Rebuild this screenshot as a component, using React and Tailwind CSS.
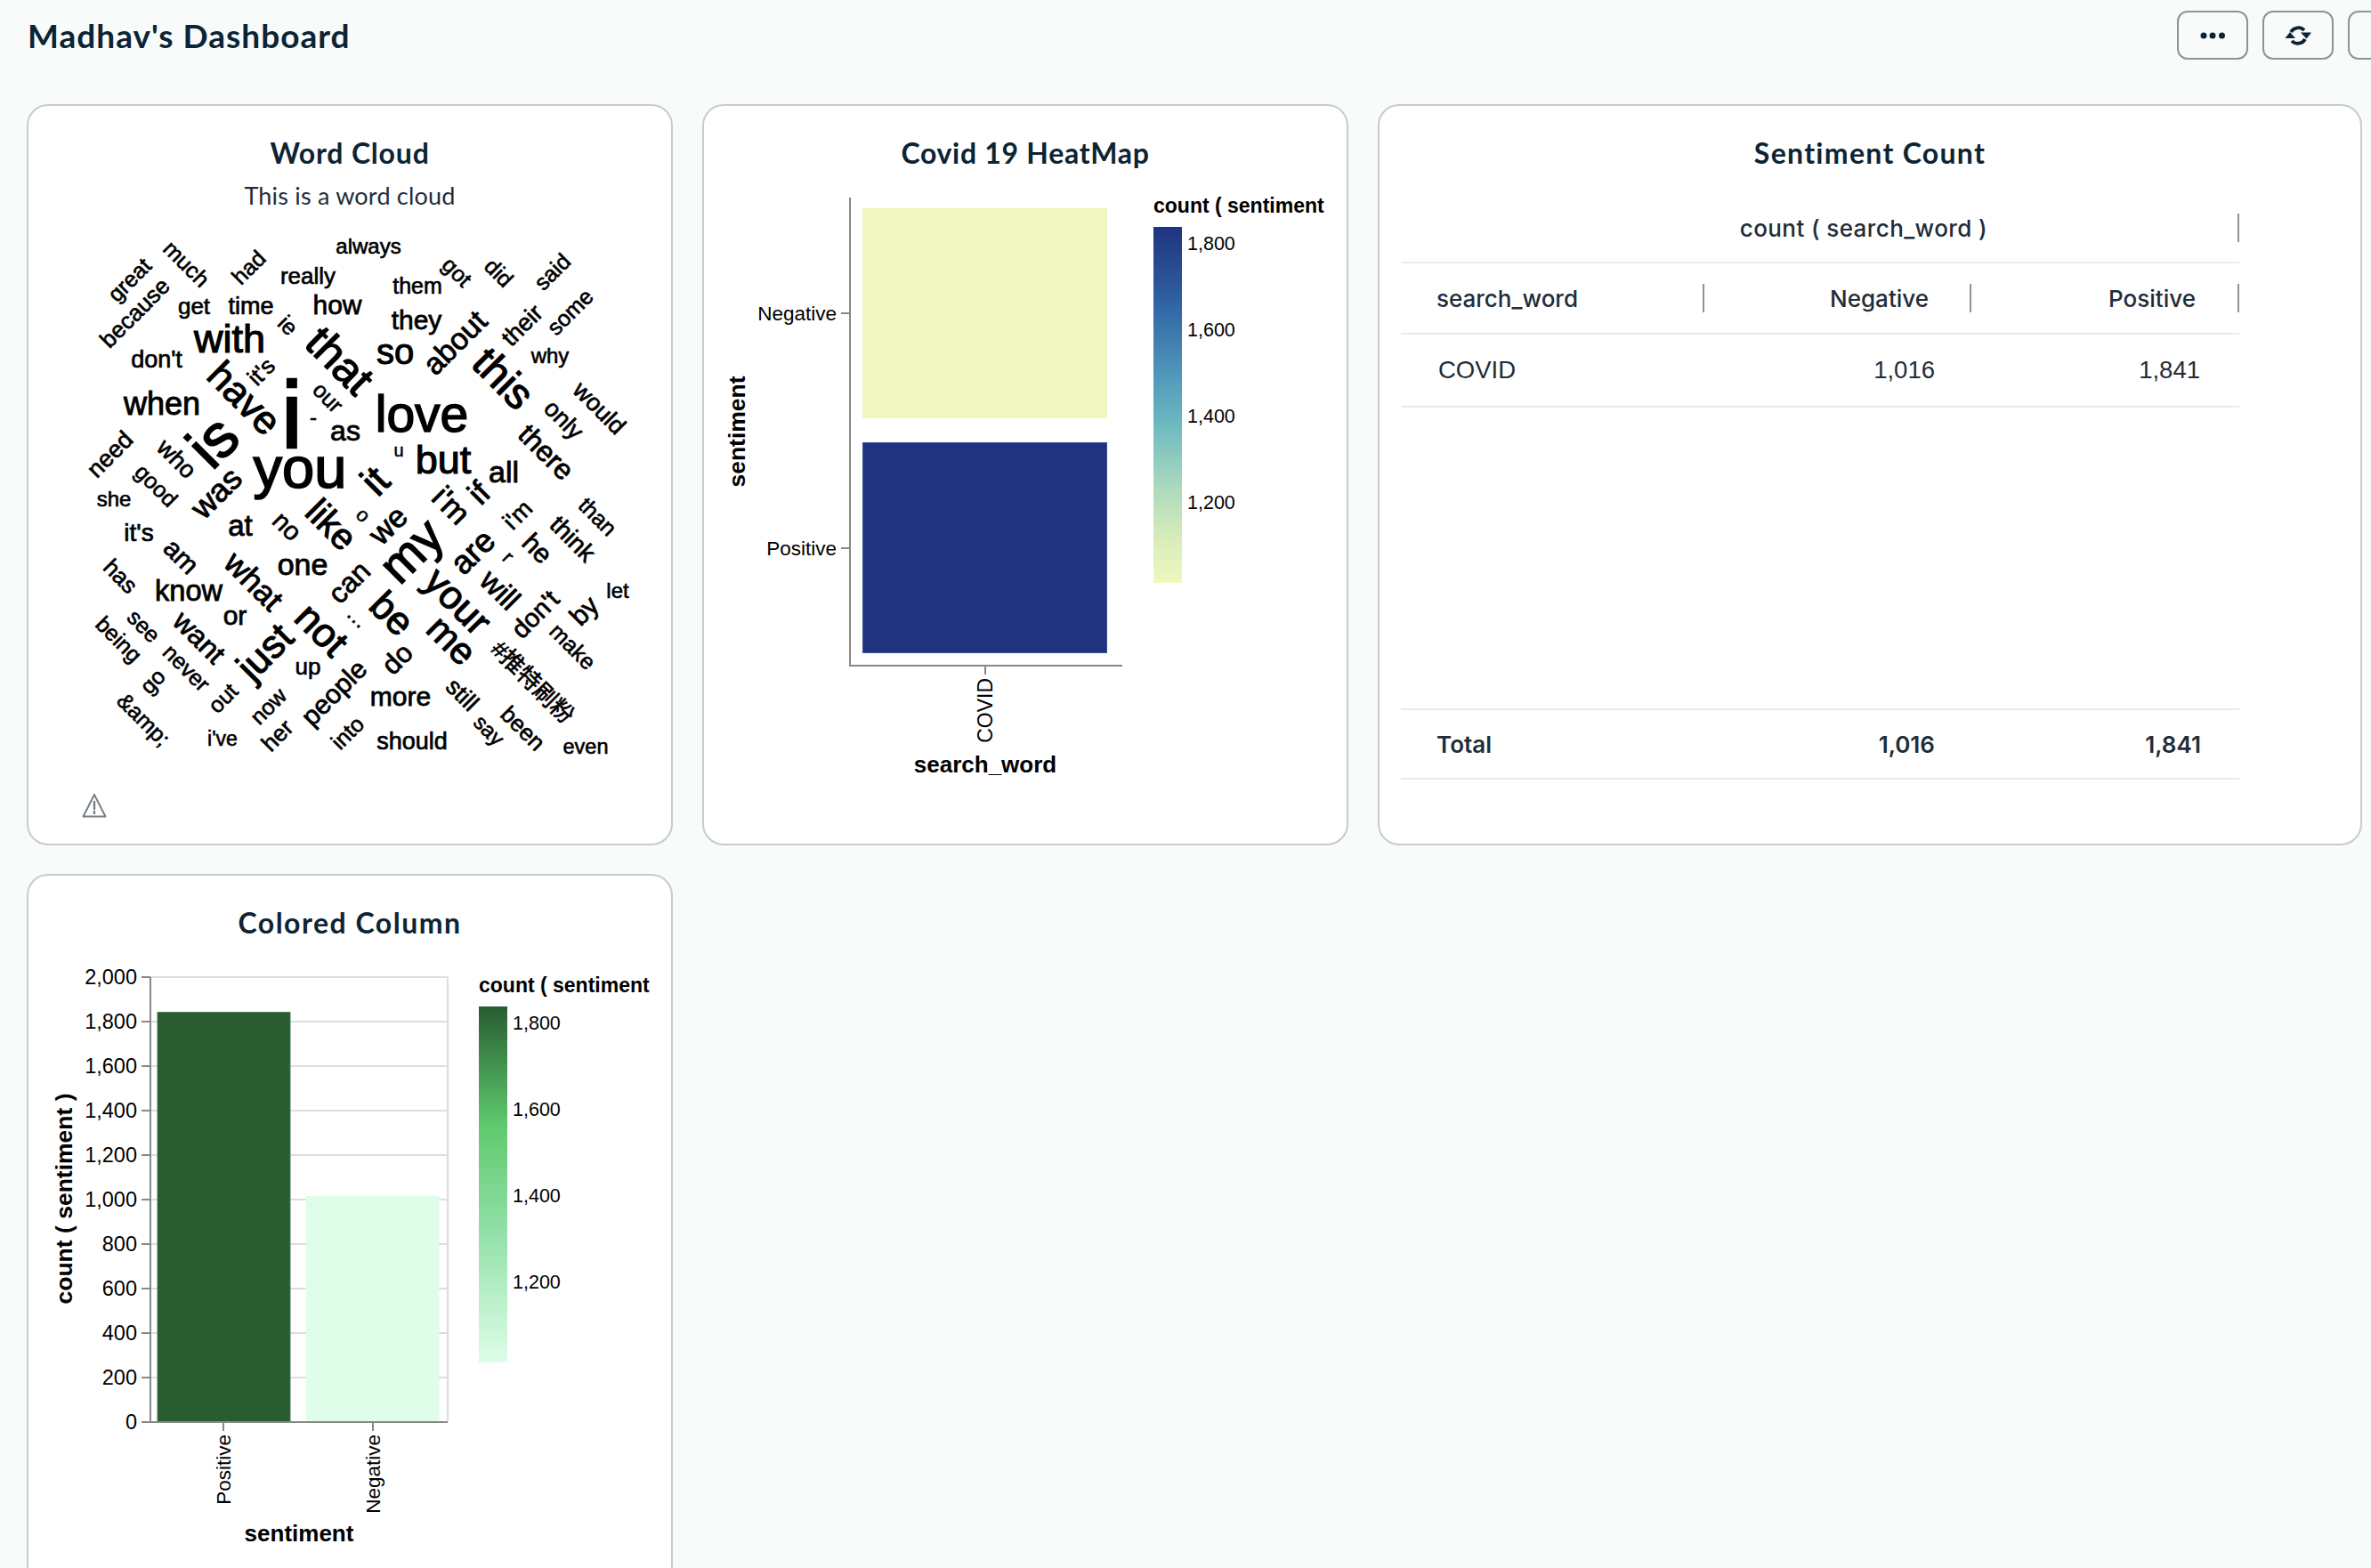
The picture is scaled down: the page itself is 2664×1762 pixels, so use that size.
const words = [
  ["great", 147, 316, 25, -45],
  ["much", 208, 298, 25, 45],
  ["had", 281, 302, 25, -45],
  ["really", 346, 312, 26, 0],
  ["always", 414, 279, 24, 0],
  ["because", 153, 353, 26, -45],
  ["get", 218, 346, 26, 0],
  ["time", 282, 346, 27, 0],
  ["how", 379, 345, 30, 0],
  ["with", 258, 384, 45, 0],
  ["ie", 322, 367, 25, 45],
  ["don't", 176, 406, 27, 0],
  ["that", 379, 408, 50, 45],
  ["have", 272, 450, 44, 45],
  ["it's", 295, 419, 26, -45],
  ["i", 328, 476, 105, 0],
  ["our", 367, 448, 25, 45],
  ["-", 352, 471, 24, 0],
  ["as", 388, 487, 32, 0],
  ["is", 243, 500, 68, -45],
  ["when", 182, 457, 36, 0],
  ["need", 125, 512, 27, -45],
  ["who", 197, 517, 27, 45],
  ["you", 337, 531, 65, 0],
  ["love", 474, 470, 57, 0],
  ["u", 448, 508, 20, 0],
  ["but", 498, 520, 45, 0],
  ["all", 566, 533, 34, 0],
  ["it", 424, 543, 46, -45],
  ["they", 468, 362, 30, 0],
  ["them", 469, 323, 25, 0],
  ["got", 512, 307, 25, 45],
  ["did", 559, 308, 25, 45],
  ["said", 622, 307, 25, -45],
  ["so", 444, 399, 40, 0],
  ["about", 513, 387, 34, -45],
  ["their", 588, 367, 27, -45],
  ["some", 642, 352, 25, -45],
  ["why", 618, 402, 24, 0],
  ["this", 563, 428, 48, 45],
  ["would", 672, 460, 27, 45],
  ["only", 632, 473, 27, 45],
  ["there", 612, 510, 32, 45],
  ["she", 128, 563, 24, 0],
  ["good", 174, 547, 25, 45],
  ["was", 245, 556, 36, -45],
  ["like", 370, 592, 41, 45],
  ["no", 321, 593, 29, 45],
  ["o", 407, 580, 22, 45],
  ["we", 438, 592, 35, -45],
  ["at", 270, 593, 33, 0],
  ["it's", 156, 601, 28, 0],
  ["am", 202, 627, 30, 45],
  ["what", 283, 655, 36, 45],
  ["one", 340, 637, 34, 0],
  ["can", 394, 656, 32, -45],
  ["has", 134, 649, 26, 45],
  ["know", 212, 667, 32.5, 0],
  ["or", 264, 694, 30, 0],
  ["not", 359, 710, 45, 45],
  ["see", 160, 705, 25, 45],
  ["want", 222, 718, 32, 45],
  ["just", 300, 735, 44, -45],
  ["being", 132, 720, 25, 45],
  ["never", 208, 752, 25, 45],
  ["go", 173, 767, 25, -45],
  ["up", 346, 751, 26, 0],
  ["…", 401, 695, 24, 45],
  ["out", 252, 786, 25, -45],
  ["now", 303, 795, 25, -45],
  ["people", 377, 780, 30, -45],
  ["do", 448, 742, 31, -45],
  ["&amp;", 160, 810, 25, 45],
  ["i've", 250, 832, 23, 0],
  ["her", 313, 828, 26, -45],
  ["into", 392, 825, 25, -45],
  ["i'm", 505, 570, 35, 45],
  ["if", 540, 556, 36, -45],
  ["my", 465, 622, 56, -45],
  ["are", 533, 622, 37, -45],
  ["i'm", 583, 580, 27, -45],
  ["than", 670, 582, 25, 45],
  ["think", 642, 607, 28, 45],
  ["he", 602, 618, 30, 45],
  ["r", 570, 627, 22, 45],
  ["will", 560, 665, 34, 45],
  ["your", 512, 678, 44, 45],
  ["be", 438, 692, 44, 45],
  ["me", 505, 722, 42, 45],
  ["don't", 603, 692, 29, -45],
  ["by", 658, 688, 30, -45],
  ["let", 694, 666, 24, 0],
  ["make", 642, 728, 25, 45],
  ["#推特刷粉", 597, 768, 26, 45],
  ["more", 450, 785, 30, 0],
  ["still", 518, 782, 27, 45],
  ["say", 548, 822, 24, 45],
  ["been", 586, 820, 26, 45],
  ["should", 463, 835, 27, 0],
  ["even", 658, 841, 23.5, 0],
];

const chartFont = "[font-family:'Liberation_Sans','Noto_Sans_CJK_SC',sans-serif]";

const Card = ({ title, tracking, children }) => (
  <div className="bg-white border-2 border-[#c5cccf] rounded-[24px] h-[833px] pt-[33px]">
    <h2 className={`text-[32px] leading-10 font-bold text-center text-[#0c2433] ${tracking}`}>{title}</h2>
    {children}
  </div>
);

const WordCloud = () => (
  <svg viewBox="32 238 722 642" className={`block w-[722px] h-[642px] ${chartFont}`}>
    {words.map(([word, x, y, size, rot], i) => (
      <text
        key={i}
        transform={`translate(${x} ${y}) rotate(${rot})`}
        dy="0.26em"
        textAnchor="middle"
        fontSize={size}
        fill="#000"
        stroke="#000"
        strokeWidth={size * 0.026}
      >
        {word}
      </text>
    ))}
  </svg>
);

const HeatMap = () => (
  <svg viewBox="791 200 722 740" className={`block mt-2 w-[722px] h-[740px] ${chartFont}`}>
    <defs>
      <linearGradient id="blues" x1="0" y1="0" x2="0" y2="1">
        <stop offset="0" stopColor="#20337f" />
        <stop offset="0.2" stopColor="#2f5fa3" />
        <stop offset="0.38" stopColor="#4a8fb8" />
        <stop offset="0.55" stopColor="#6cb8c0" />
        <stop offset="0.72" stopColor="#a6d8be" />
        <stop offset="0.88" stopColor="#d8edb9" />
        <stop offset="1" stopColor="#f0f7c0" />
      </linearGradient>
    </defs>
    <rect x="969" y="234" width="275" height="236" fill="#f0f7c0" />
    <rect x="969.5" y="497.5" width="274" height="236" fill="#20337f" stroke="#3c4f99" />
    <path d="M955 222V748H1261M945 352H955M945 616H955M1107 748V758" fill="none" stroke="#888" strokeWidth="2" />
    <g fontSize="22.5" fill="#000" textAnchor="end">
      <text x="940" y="360">Negative</text>
      <text x="940" y="624">Positive</text>
      <text transform="translate(1115 762) rotate(-90)" fontSize="23">COVID</text>
    </g>
    <text x="1107" y="868" fontSize="26" fontWeight="bold" textAnchor="middle">search_word</text>
    <text transform="translate(837 485) rotate(-90)" fontSize="26.5" fontWeight="bold" textAnchor="middle">sentiment</text>
    <text x="1296" y="239" fontSize="23" fontWeight="bold">count ( sentiment</text>
    <rect x="1296" y="255" width="32" height="400" fill="url(#blues)" />
    <g fontSize="21.5">
      <text x="1334" y="281">1,800</text>
      <text x="1334" y="378">1,600</text>
      <text x="1334" y="475">1,400</text>
      <text x="1334" y="572">1,200</text>
    </g>
  </svg>
);

const yTicks = [2000, 1800, 1600, 1400, 1200, 1000, 800, 600, 400, 200, 0];

const ColumnChart = () => (
  <svg viewBox="32 1065 722 720" className={`block mt-2 w-[722px] h-[720px] ${chartFont}`}>
    <defs>
      <linearGradient id="greens" x1="0" y1="0" x2="0" y2="1">
        <stop offset="0" stopColor="#285c30" />
        <stop offset="0.33" stopColor="#5ec96c" />
        <stop offset="0.62" stopColor="#8fdfa5" />
        <stop offset="1" stopColor="#dffde9" />
      </linearGradient>
    </defs>
    {yTicks.map((t) => {
      const y = 1598 - t * 0.25;
      return (
        <g key={t}>
          <line x1="169" x2="503" y1={y} y2={y} stroke="#ddd" strokeWidth="2" />
          <line x1="159" x2="169" y1={y} y2={y} stroke="#888" strokeWidth="2" />
          <text x="154" y={y + 8} fontSize="23.5" textAnchor="end">
            {t.toLocaleString("en-US")}
          </text>
        </g>
      );
    })}
    <path d="M503 1098V1598" stroke="#ddd" strokeWidth="2" />
    <rect x="177" y="1137.5" width="149" height="460" fill="#285c30" stroke="#4a7a52" />
    <rect x="344" y="1344" width="149.5" height="254" fill="#dffde9" />
    <path d="M169 1098V1598H503M251 1598V1608M419 1598V1608" fill="none" stroke="#888" strokeWidth="2" />
    <g fontSize="22.5" textAnchor="end">
      <text transform="translate(259 1612) rotate(-90)">Positive</text>
      <text transform="translate(427 1612) rotate(-90)">Negative</text>
    </g>
    <text x="336" y="1732" fontSize="26" fontWeight="bold" textAnchor="middle">sentiment</text>
    <text transform="translate(81 1347) rotate(-90)" fontSize="26.5" fontWeight="bold" textAnchor="middle">
      count ( sentiment )
    </text>
    <text x="538" y="1115" fontSize="23" fontWeight="bold">count ( sentiment</text>
    <rect x="538" y="1131" width="32" height="400" fill="url(#greens)" />
    <g fontSize="21.5">
      <text x="576" y="1157">1,800</text>
      <text x="576" y="1254">1,600</text>
      <text x="576" y="1351">1,400</text>
      <text x="576" y="1448">1,200</text>
    </g>
  </svg>
);

const Sep = () => <span className="w-[2px] h-8 bg-[#8a9499] shrink-0" />;

const rowClass = "grid grid-cols-[341px_300px_301px] border-b-2 border-[#e9ecec]";

const SentimentTable = () => (
  <div className="mt-[34px] ml-6 w-[942px] text-[#1f2d3a] [font-family:Inter,sans-serif] text-[26px]">
    <div className="flex items-center justify-end h-[70px] pb-2 border-b-2 border-[#e9ecec]">
      <span className="mr-[281px] font-medium tracking-[0.4px]">count ( search_word )</span>
      <Sep />
    </div>
    <div className={`${rowClass} h-[80px] font-medium`}>
      <div className="flex items-center justify-between pl-10">
        <span>search_word</span>
        <Sep />
      </div>
      <div className="flex items-center justify-end">
        <span className="mr-[46px]">Negative</span>
        <Sep />
      </div>
      <div className="flex items-center justify-end">
        <span className="mr-[47px]">Positive</span>
        <Sep />
      </div>
    </div>
    <div className={`${rowClass} h-[82px] items-center text-[27.5px] [font-family:'Liberation_Sans',sans-serif]`}>
      <span className="pl-[42px]">COVID</span>
      <span className="text-right pr-[41px]">1,016</span>
      <span className="text-right pr-[44px]">1,841</span>
    </div>
    <div className={`${rowClass} h-[340px]`} />
    <div className={`${rowClass} h-[78px] font-semibold items-center`}>
      <span className="pl-10">Total</span>
      <span className="text-right pr-[41px]">1,016</span>
      <span className="text-right pr-[43px]">1,841</span>
    </div>
  </div>
);

const HeaderButton = ({ children }) => (
  <button className="flex items-center justify-center w-20 h-[55px] shrink-0 rounded-xl border-2 border-[#8a9499] bg-transparent text-[#0c2433]">
    {children}
  </button>
);

export default function App() {
  return (
    <div className="w-[2664px] h-[1762px] overflow-hidden bg-[#f9fbfb] [font-family:Lato,sans-serif]">
      <div className="flex items-center justify-between pl-[31px] pt-3 h-[67px]">
        <h1 className="text-[37px] font-bold tracking-[1px] text-[#0c2433]">Madhav's Dashboard</h1>
        <div className="flex gap-4 mr-[-54px]">
          <HeaderButton>
            <svg width="30" height="10" viewBox="0 0 30 10" fill="currentColor">
              <circle cx="5" cy="5" r="3.5" />
              <circle cx="15" cy="5" r="3.5" />
              <circle cx="25.5" cy="5" r="3.5" />
            </svg>
          </HeaderButton>
          <HeaderButton>
            <svg width="30" height="24" viewBox="0 0 30 24" fill="none" stroke="currentColor">
              <path d="M7 8A9.5 9.5 0 0 1 22 6M23 16A9.5 9.5 0 0 1 8 18" strokeWidth="3.8" />
              <path d="M18 8.5H30L24.5 15.5ZM0.5 15H12L6 8Z" fill="currentColor" stroke="none" />
            </svg>
          </HeaderButton>
          <HeaderButton />
        </div>
      </div>
      <div className="grid grid-cols-[726px_726px_1106px] gap-x-[33px] gap-y-8 ml-[30px] mt-[50px]">
        <Card title="Word Cloud" tracking="tracking-[0.8px]">
          <p className="mt-[10px] text-[27px] tracking-[0.2px] leading-9 text-center text-[#1f2d3a]">This is a word cloud</p>
          <WordCloud />
          <svg className="ml-[60px] mt-[11px]" width="28" height="28" viewBox="0 0 28 28" fill="none" stroke="#748089" strokeWidth="2" strokeLinejoin="round">
            <path d="M14 2L1.5 26.5H26.5Z" />
            <path d="M14 10V18M14 21V23" strokeLinecap="round" strokeWidth="2.4" />
          </svg>
        </Card>
        <Card title="Covid 19 HeatMap" tracking="tracking-[0.7px]">
          <HeatMap />
        </Card>
        <Card title="Sentiment Count" tracking="tracking-[1.3px]">
          <SentimentTable />
        </Card>
        <Card title="Colored Column" tracking="tracking-[1.5px]">
          <ColumnChart />
        </Card>
      </div>
    </div>
  );
}
